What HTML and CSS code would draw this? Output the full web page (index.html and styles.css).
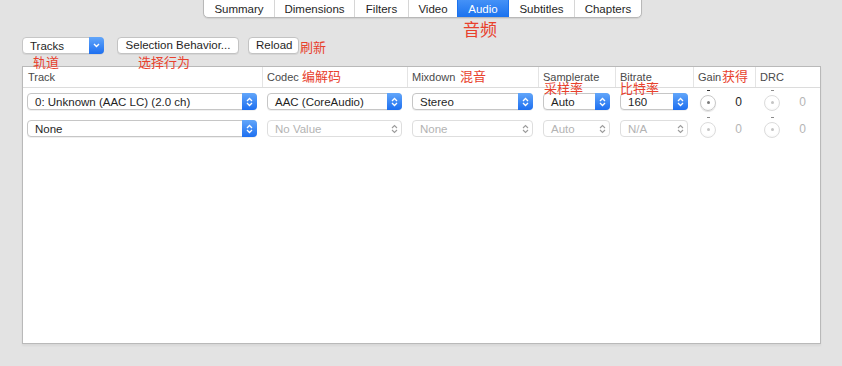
FILE: index.html
```html
<!DOCTYPE html>
<html lang="en">

<head>
    <meta charset="UTF-8">
    <title>Audio</title>
    <link rel="stylesheet" href="styles.css">
</head>

<body>
    <div class="window">
        <!-- Tab bar along the top edge -->
        <div class="tabs">
            <div class="tab">Summary</div>
            <div class="tab">Dimensions</div>
            <div class="tab">Filters</div>
            <div class="tab">Video</div>
            <div class="tab active">Audio</div>
            <div class="tab">Subtitles</div>
            <div class="tab">Chapters</div>
        </div>

        <!-- Toolbar: tracks menu and buttons -->
        <div class="toolbar">
            <div class="popup popup-tracks">
                <span class="popup-label">Tracks</span>
                <span class="popup-arrow">
                    <svg width="7" height="5" viewBox="0 0 7 5"><path d="M1 1 L3.5 3.5 L6 1" stroke="#fff" stroke-width="1.4" fill="none"/></svg>
                </span>
            </div>
            <button class="btn btn-selection">Selection Behavior...</button>
            <button class="btn btn-reload">Reload</button>
        </div>

        <!-- Audio track table -->
        <div class="table">
            <div class="row head">
                <div class="cell">Track</div>
                <div class="cell">Codec</div>
                <div class="cell">Mixdown</div>
                <div class="cell">Samplerate</div>
                <div class="cell">Bitrate</div>
                <div class="cell">Gain</div>
                <div class="cell">DRC</div>
            </div>

            <div class="row">
                <div class="cell cell-track">
                    <div class="popup">
                        <span class="popup-label">0: Unknown (AAC LC) (2.0 ch)</span>
                        <span class="popup-arrow"><svg width="7" height="10" viewBox="0 0 7 10"><path d="M1 4 L3.5 1.5 L6 4 M1 6 L3.5 8.5 L6 6" stroke="#fff" stroke-width="1.3" fill="none"/></svg></span>
                    </div>
                </div>
                <div class="cell">
                    <div class="popup">
                        <span class="popup-label">AAC (CoreAudio)</span>
                        <span class="popup-arrow"><svg width="7" height="10" viewBox="0 0 7 10"><path d="M1 4 L3.5 1.5 L6 4 M1 6 L3.5 8.5 L6 6" stroke="#fff" stroke-width="1.3" fill="none"/></svg></span>
                    </div>
                </div>
                <div class="cell">
                    <div class="popup">
                        <span class="popup-label">Stereo</span>
                        <span class="popup-arrow"><svg width="7" height="10" viewBox="0 0 7 10"><path d="M1 4 L3.5 1.5 L6 4 M1 6 L3.5 8.5 L6 6" stroke="#fff" stroke-width="1.3" fill="none"/></svg></span>
                    </div>
                </div>
                <div class="cell">
                    <div class="popup">
                        <span class="popup-label">Auto</span>
                        <span class="popup-arrow"><svg width="7" height="10" viewBox="0 0 7 10"><path d="M1 4 L3.5 1.5 L6 4 M1 6 L3.5 8.5 L6 6" stroke="#fff" stroke-width="1.3" fill="none"/></svg></span>
                    </div>
                </div>
                <div class="cell">
                    <div class="popup">
                        <span class="popup-label">160</span>
                        <span class="popup-arrow"><svg width="7" height="10" viewBox="0 0 7 10"><path d="M1 4 L3.5 1.5 L6 4 M1 6 L3.5 8.5 L6 6" stroke="#fff" stroke-width="1.3" fill="none"/></svg></span>
                    </div>
                </div>
                <div class="cell cell-gain">
                    <span class="knob"></span>
                    <span class="value">0</span>
                </div>
                <div class="cell cell-drc">
                    <span class="knob off"></span>
                    <span class="value off">0</span>
                </div>
            </div>

            <div class="row">
                <div class="cell cell-track">
                    <div class="popup">
                        <span class="popup-label">None</span>
                        <span class="popup-arrow"><svg width="7" height="10" viewBox="0 0 7 10"><path d="M1 4 L3.5 1.5 L6 4 M1 6 L3.5 8.5 L6 6" stroke="#fff" stroke-width="1.3" fill="none"/></svg></span>
                    </div>
                </div>
                <div class="cell">
                    <div class="popup disabled">
                        <span class="popup-label">No Value</span>
                        <span class="popup-arrow"><svg width="7" height="10" viewBox="0 0 7 10"><path d="M1 4 L3.5 1.5 L6 4 M1 6 L3.5 8.5 L6 6" stroke="#9c9c9c" stroke-width="1.1" fill="none"/></svg></span>
                    </div>
                </div>
                <div class="cell">
                    <div class="popup disabled">
                        <span class="popup-label">None</span>
                        <span class="popup-arrow"><svg width="7" height="10" viewBox="0 0 7 10"><path d="M1 4 L3.5 1.5 L6 4 M1 6 L3.5 8.5 L6 6" stroke="#9c9c9c" stroke-width="1.1" fill="none"/></svg></span>
                    </div>
                </div>
                <div class="cell">
                    <div class="popup disabled">
                        <span class="popup-label">Auto</span>
                        <span class="popup-arrow"><svg width="7" height="10" viewBox="0 0 7 10"><path d="M1 4 L3.5 1.5 L6 4 M1 6 L3.5 8.5 L6 6" stroke="#9c9c9c" stroke-width="1.1" fill="none"/></svg></span>
                    </div>
                </div>
                <div class="cell">
                    <div class="popup disabled">
                        <span class="popup-label">N/A</span>
                        <span class="popup-arrow"><svg width="7" height="10" viewBox="0 0 7 10"><path d="M1 4 L3.5 1.5 L6 4 M1 6 L3.5 8.5 L6 6" stroke="#9c9c9c" stroke-width="1.1" fill="none"/></svg></span>
                    </div>
                </div>
                <div class="cell cell-gain">
                    <span class="knob off"></span>
                    <span class="value off">0</span>
                </div>
                <div class="cell cell-drc">
                    <span class="knob off"></span>
                    <span class="value off">0</span>
                </div>
            </div>
        </div>

        <!-- Red translation notes laid over the window -->
        <span class="note note-big note-audio">音频</span>
        <span class="note note-tracks">轨道</span>
        <span class="note note-selection">选择行为</span>
        <span class="note note-reload">刷新</span>
        <span class="note note-codec">编解码</span>
        <span class="note note-mixdown">混音</span>
        <span class="note note-samplerate">采样率</span>
        <span class="note note-bitrate">比特率</span>
        <span class="note note-gain">获得</span>
    </div>
</body>

</html>
```

FILE: styles.css
```css
/* Page and window background */
body {
    margin: 0;
    background-color: #e3e3e3;
    font-family: "Liberation Sans", Arial, sans-serif;
    color: #1f1f1f;
}

.window {
    position: relative;
    width: 842px;
    height: 366px;
    overflow: hidden;
}

/* Segmented tab bar */
.tabs {
    display: grid;
    grid-template-columns: 70px 80px 54px 49px 51px 66px 67px;
    width: 439px;
    height: 22px;
    margin: -4px 0 0 203px;
    box-sizing: border-box;
    background-color: #fff;
    border: 1px solid #b8b8b8;
    border-radius: 0 0 5px 5px;
    box-shadow: 0 1px 1px rgba(0, 0, 0, 0.08);
    overflow: hidden;
}

.tab {
    display: flex;
    align-items: center;
    justify-content: center;
    padding-top: 4px;
    font-size: 11.5px;
    border-left: 1px solid #d6d6d6;
}

.tab:first-child {
    border-left: none;
}

.tab.active {
    background: linear-gradient(#4c97f8, #1b72ee);
    color: #fff;
    border-left-color: #1b72ee;
}

.tab.active + .tab {
    border-left-color: #1b72ee;
}

/* Toolbar row */
.toolbar {
    display: flex;
    align-items: center;
    margin: 19px 0 0 22px;
}

.btn {
    height: 17px;
    box-sizing: border-box;
    padding: 0 7px;
    margin: 0;
    background-color: #fff;
    border: 1px solid #c3c3c3;
    border-radius: 4px;
    box-shadow: 0 1px 0 rgba(0, 0, 0, 0.06);
    font-family: "Liberation Sans", Arial, sans-serif;
    font-size: 11.5px;
    color: #1f1f1f;
    line-height: 15px;
}

.btn-selection {
    width: 122px;
    margin-left: 13px;
}

.btn-reload {
    width: 51px;
    margin-left: 9px;
}

/* Pop-up menus */
.popup {
    display: flex;
    align-items: center;
    height: 17px;
    box-sizing: border-box;
    background-color: #fff;
    border: 1px solid #c6c6c6;
    border-radius: 4px;
    box-shadow: 0 1px 0 rgba(0, 0, 0, 0.06);
}

.popup-tracks {
    width: 82px;
}

.popup-label {
    flex: 1;
    padding-left: 7px;
    font-size: 11.5px;
    white-space: nowrap;
    overflow: hidden;
}

.popup-arrow {
    display: flex;
    align-items: center;
    justify-content: center;
    width: 15px;
    align-self: stretch;
    margin: -1px -1px -1px 0;
    background: linear-gradient(#62a6fa, #1d6ff0);
    border-radius: 0 4px 4px 0;
}

.popup.disabled {
    border-color: #dedede;
    box-shadow: none;
}

.popup.disabled .popup-label {
    color: #b3b3b3;
}

.popup.disabled .popup-arrow {
    background: none;
}

/* Track table */
.table {
    width: 799px;
    height: 278px;
    margin: 12px 0 0 22px;
    box-sizing: border-box;
    background-color: #fff;
    border: 1px solid #b9b9b9;
    box-shadow: 0 2px 2px rgba(0, 0, 0, 0.05);
}

.row {
    display: grid;
    grid-template-columns: 239px 145px 131px 77px 78px 62px 65px;
    height: 27px;
}

.row .cell {
    display: flex;
    align-items: center;
    padding: 0 5px;
}

.row .cell > .popup {
    flex: 1;
}

.row .cell-track {
    padding: 0 5px 0 4px;
}

.row.head {
    height: 20px;
    border-bottom: 1px solid #dcdcdc;
}

.row.head .cell {
    padding: 0 4px;
    font-size: 11px;
    color: #4a4a4a;
    border-left: 1px solid #e4e4e4;
}

.row.head .cell:first-child {
    padding-left: 5px;
    border-left: none;
}

/* Gain and DRC knobs */
.cell-gain .knob {
    margin-left: 2px;
}

.cell-drc .knob {
    margin-left: 4px;
}

.knob {
    position: relative;
    width: 16px;
    height: 16px;
    margin-top: 3px;
    box-sizing: border-box;
    border-radius: 50%;
    background: radial-gradient(circle at 50% 40%, #fff 55%, #f0f0f0);
    border: 1px solid #c8c8c8;
    box-shadow: 0 1px 1px rgba(0, 0, 0, 0.12);
}

.knob::before {
    content: '';
    position: absolute;
    left: 6px;
    top: 5px;
    width: 3px;
    height: 3px;
    border-radius: 50%;
    background-color: #7a7a7a;
}

.knob::after {
    content: '';
    position: absolute;
    left: 6px;
    top: -6px;
    width: 3px;
    height: 1px;
    background-color: #333;
}

.knob.off {
    border-color: #dcdcdc;
    box-shadow: none;
}

.knob.off::before {
    background-color: #c4c4c4;
}

.knob.off::after {
    background-color: #8a8a8a;
}

.value {
    width: 26px;
    text-align: right;
    font-size: 12px;
    margin-top: 1px;
}

.value.off {
    color: #b5b5b5;
}

/* Red annotation labels */
.note {
    position: absolute;
    font-family: "Noto Sans CJK SC", sans-serif;
    font-size: 13px;
    line-height: 13px;
    color: #e8412d;
    white-space: nowrap;
}

.note-big {
    font-size: 17px;
    line-height: 17px;
}

.note-audio { left: 463px; top: 20px; }
.note-tracks { left: 33px; top: 55px; }
.note-selection { left: 138px; top: 55px; }
.note-reload { left: 300px; top: 40px; }
.note-codec { left: 302px; top: 69px; }
.note-mixdown { left: 460px; top: 69px; }
.note-samplerate { left: 544px; top: 81px; }
.note-bitrate { left: 620px; top: 81px; }
.note-gain { left: 722px; top: 69px; }
```
